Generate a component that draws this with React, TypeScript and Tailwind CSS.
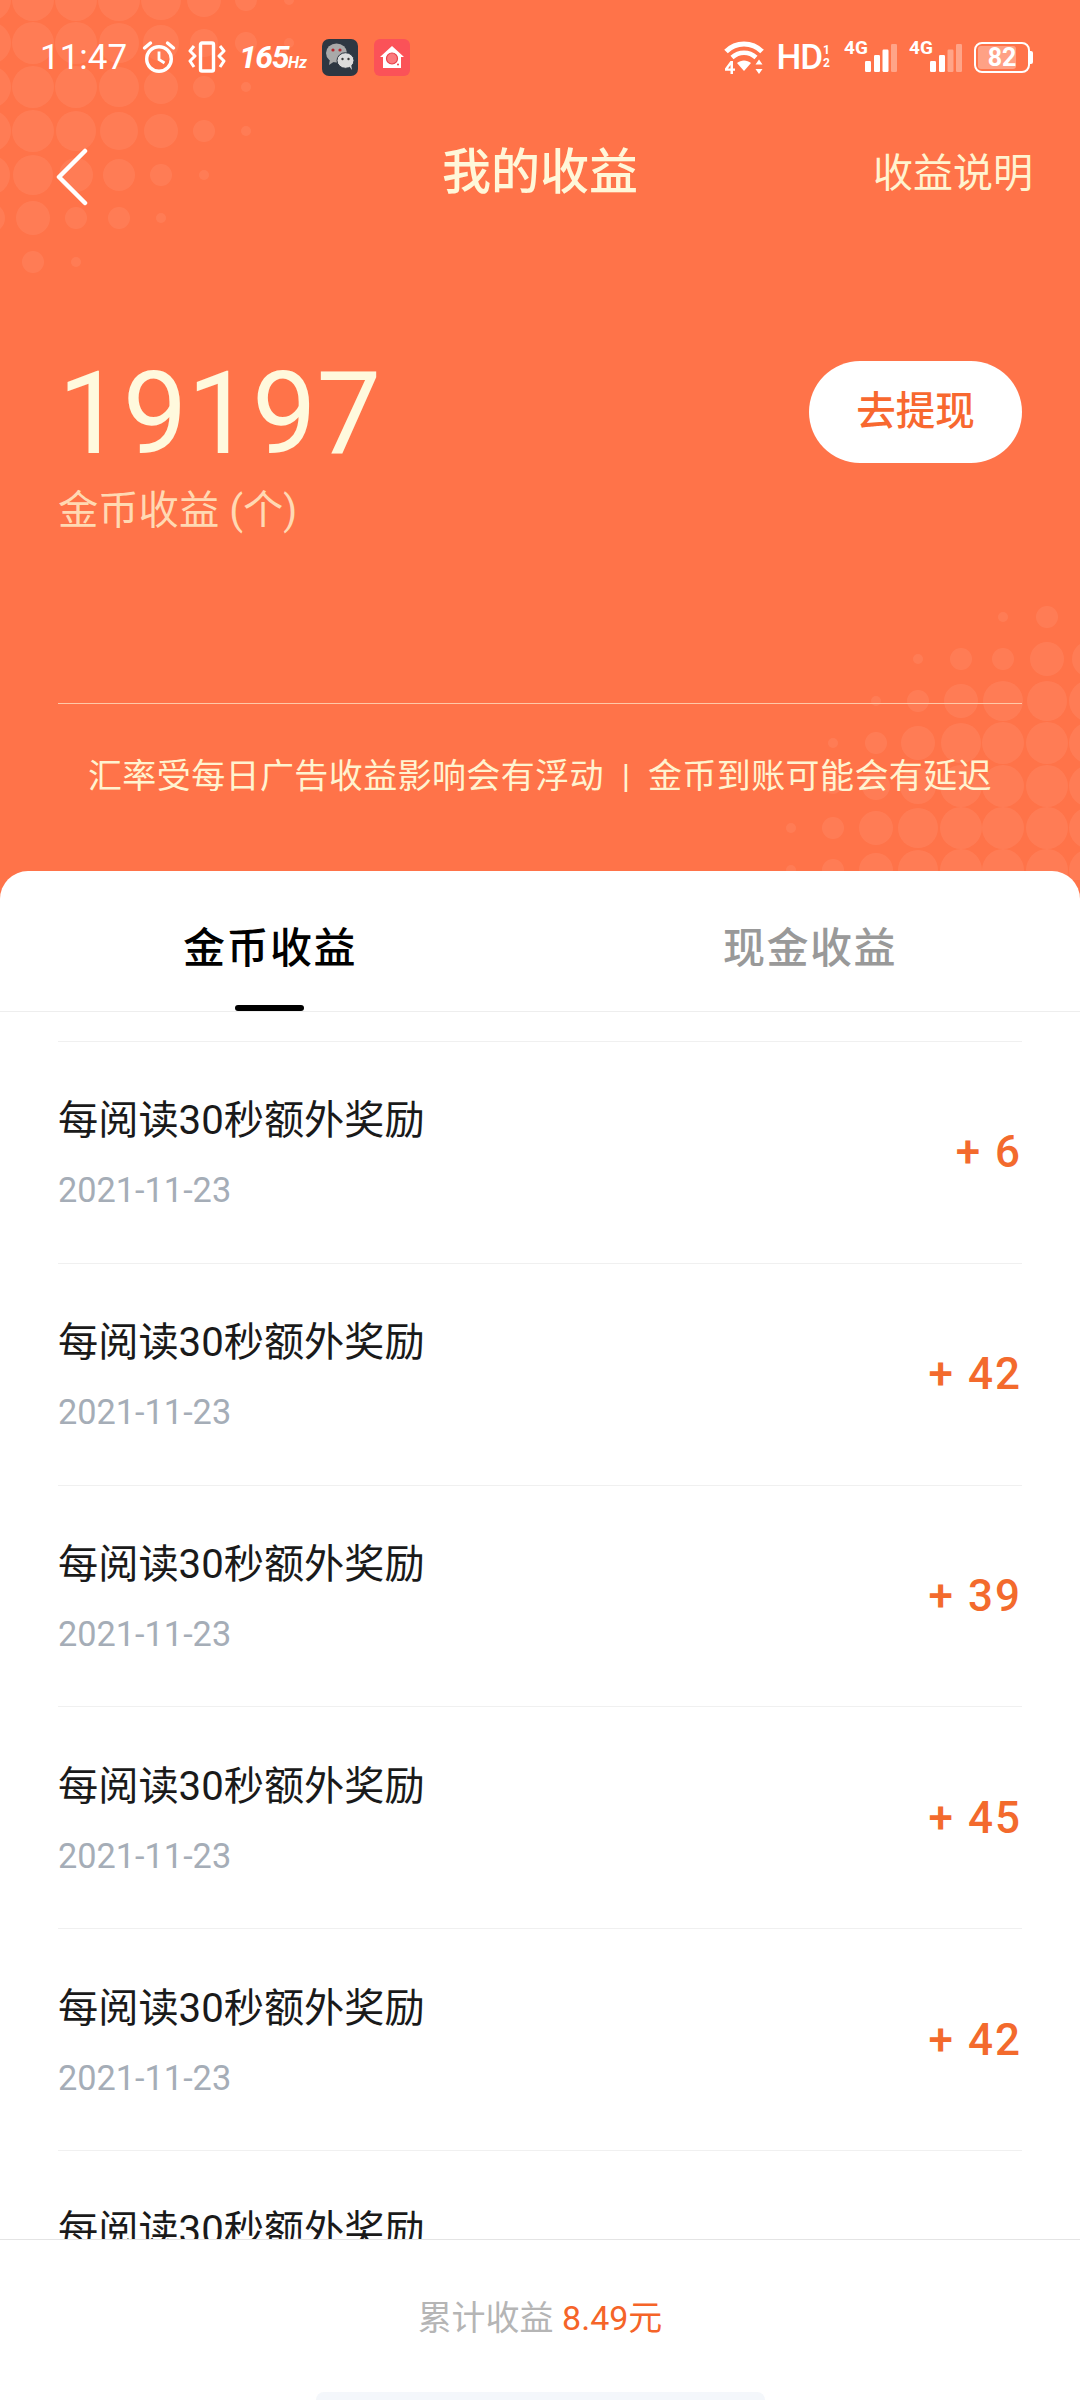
import React from "react";

const CJK = { fontFamily: '"Roboto","Noto Sans CJK SC",sans-serif' };

const TL: [number, number, number][] = [];
const BR: [number, number, number][] = [];
const tlCols = [-10, 33, 76, 119, 161, 204, 246, 289];
const tlRows: [number, number[]][] = [
  [0, [21, 21, 21, 21, 20, 17, 11, 5]],
  [43, [21, 21, 21, 20, 18, 14, 11, 5]],
  [87, [21, 21, 21, 20, 17, 11, 5, 0]],
  [131, [21, 21, 20, 19, 17, 11, 5, 0]],
  [175, [20, 20, 17, 16, 11, 5, 0, 0]],
  [218, [15, 17, 11, 11, 5, 0, 0, 0]],
  [262, [0, 11, 5, 0, 0, 0, 0, 0]],
];
tlRows.forEach(([y, rs]) => rs.forEach((r, i) => r && TL.push([tlCols[i], y, r])));
const brCols = [1090, 1047, 1003, 961, 918, 876, 833, 791];
const brRows: [number, number[]][] = [
  [617, [0, 11, 5, 0, 0, 0, 0, 0]],
  [659, [18, 17, 11, 11, 5, 0, 0, 0]],
  [701, [21, 20, 20, 17, 11, 5, 0, 0]],
  [743, [21, 21, 21, 20, 17, 11, 5, 0]],
  [786, [21, 21, 21, 21, 18, 14, 8, 0]],
  [828, [21, 21, 21, 21, 20, 17, 11, 5]],
  [870, [21, 21, 21, 21, 20, 17, 11, 5]],
];
brRows.forEach(([y, rs]) => rs.forEach((r, i) => r && BR.push([brCols[i], y, r])));

function Dots() {
  return (
    <svg className="absolute left-0 top-0" width="1080" height="880" viewBox="0 0 1080 880">
      {[...TL, ...BR].map(([x, y, r], i) => (
        <circle key={i} cx={x} cy={y} r={r} fill="#ffffff" fillOpacity="0.07" />
      ))}
    </svg>
  );
}

function Alarm() {
  return (
    <svg width="34" height="34" viewBox="0 0 34 34" fill="none" stroke="#fff" strokeWidth="3.4">
      <circle cx="17" cy="19" r="12.3" />
      <path d="M17 11.5v8l5.5 3.5" strokeWidth="2.8" />
      <path d="M2.5 8 8.5 3M31.5 8l-6-5" strokeLinecap="round" />
    </svg>
  );
}

function Vibrate() {
  return (
    <svg width="38" height="32" viewBox="0 0 38 32" fill="none" stroke="#fff" strokeWidth="3">
      <rect x="12.5" y="2" width="13" height="28" rx="1.5" strokeWidth="3.4" />
      <path d="M6 5 2 10l5 5-5 5 4 6M32 5l4 5-5 5 5 5-4 6" strokeLinejoin="round" />
    </svg>
  );
}

function WeChatTile() {
  return (
    <div className="w-[36px] h-[37px] rounded-[7px] bg-[#2e3742] flex items-center justify-center">
      <svg width="32" height="30" viewBox="0 0 32 30">
        <ellipse cx="12.5" cy="11" rx="10.5" ry="9.5" fill="#a9a9a9" />
        <path d="M6 17 5 23l6-4z" fill="#a9a9a9" />
        <circle cx="9" cy="8" r="1.6" fill="#b3272e" />
        <circle cx="16" cy="8" r="1.6" fill="#b3272e" />
        <ellipse cx="21.5" cy="18.5" rx="8.5" ry="7.8" fill="#dcdcdc" stroke="#2e3742" strokeWidth="1" />
        <path d="m25 24 3 4-1-6z" fill="#dcdcdc" />
        <circle cx="18.5" cy="17" r="1.2" fill="#3a3a3a" />
        <circle cx="24.5" cy="17" r="1.2" fill="#3a3a3a" />
      </svg>
    </div>
  );
}

function HomeTile() {
  return (
    <div className="w-[36px] h-[37px] rounded-[6px] bg-[#fb5258] flex items-center justify-center">
      <svg width="26" height="26" viewBox="0 0 26 26">
        <path d="M13 2 1 13h3v11h18V13h3z" fill="#fff" />
        <circle cx="13" cy="14.5" r="5.5" fill="#fb7a7e" stroke="#e8404a" strokeWidth="1.2" />
        <circle cx="19" cy="20.5" r="1" fill="#e8404a" />
      </svg>
    </div>
  );
}

function Wifi() {
  return (
    <svg width="40" height="33" viewBox="0 0 40 33" fill="none">
      <path d="M2 10.5C12 0.5 28 0.5 38 10.5" stroke="#fff" strokeWidth="5" />
      <path d="M8 16.5c7-6.5 17-6.5 24 0" stroke="#fff" strokeWidth="4.5" />
      <path d="M13 22c4-3.5 10-3.5 14 0L20 30z" fill="#fff" />
      <path d="M6.5 20 1 27.5v2.2h5.5V33H9v-3.3h2v-2.2H9V20zM6.5 24v3.5H4z" fill="#fff" fillRule="evenodd" />
      <path d="m35 18.5 3.5 5h-7zM35 33l3.5-5h-7z" fill="#fff" />
    </svg>
  );
}

function Signal({ faded }: { faded: number }) {
  const bars = [
    { y: 17, h: 11 },
    { y: 11, h: 17 },
    { y: 5.5, h: 22.5 },
    { y: 0, h: 28 },
  ];
  const xs = [0, 9, 17.5, 26];
  return (
    <div className="relative w-[54px] h-[34px]">
      <span className="absolute left-0 top-[-2px] text-[19px] leading-[20px] font-bold text-white" style={{ fontFamily: "Roboto, sans-serif" }}>
        4G
      </span>
      <svg className="absolute left-[21px] top-[3px]" width="33" height="30" viewBox="0 0 33 30">
        {bars.map((b, i) => (
          <rect key={i} x={xs[i]} y={b.y + 1} width="6" height={b.h} rx="1.2" fill="#fff" fillOpacity={i >= 4 - faded ? 0.35 : 1} />
        ))}
      </svg>
    </div>
  );
}

function Battery() {
  return (
    <div className="flex items-center">
      <div className="relative w-[56px] h-[31px] rounded-[8px] border-[2.5px] border-white overflow-hidden flex items-center justify-center">
        <div className="absolute left-[2px] top-[2px] bottom-[2px] w-[38px] rounded-[3px] bg-[#ffffff55]" />
        <span className="relative text-[25px] leading-none font-bold text-white" style={{ fontFamily: "Roboto, sans-serif" }}>
          82
        </span>
      </div>
      <div className="w-[3px] h-[13px] bg-white rounded-r-[2px]" />
    </div>
  );
}

function StatusBar() {
  return (
    <div className="h-[115px] pt-[38px] pl-[40px] pr-[47px] flex items-start justify-between">
      <div className="flex items-center h-[38px]">
        <span className="text-[35px] leading-none text-white w-[102px]" style={{ fontFamily: "Roboto, sans-serif" }}>
          11:47
        </span>
        <Alarm />
        <div className="w-[12px]" />
        <Vibrate />
        <span className="ml-[13px] w-[70px] text-white font-bold italic text-[32px] tracking-[-1.5px] leading-none whitespace-nowrap" style={{ fontFamily: "Roboto, sans-serif" }}>
          165<span className="text-[16px] tracking-normal">Hz</span>
        </span>
        <div className="w-[13px]" />
        <WeChatTile />
        <div className="w-[16px]" />
        <HomeTile />
      </div>
      <div className="flex items-center h-[38px]">
        <Wifi />
        <span className="ml-[12px] text-[35px] leading-none text-white font-medium tracking-[-1px]" style={{ fontFamily: "Roboto, sans-serif" }}>
          HD
        </span>
        <span className="flex flex-col items-center ml-[1px] text-[12px] leading-[13px] font-bold text-white" style={{ fontFamily: "Roboto, sans-serif" }}>
          <span>1</span>
          <span>2</span>
        </span>
        <div className="w-[14px]" />
        <Signal faded={1} />
        <div className="w-[11px]" />
        <Signal faded={2} />
        <div className="w-[11px]" />
        <Battery />
      </div>
    </div>
  );
}

function Row({ amount }: { amount: string }) {
  return (
    <div className="h-[221.8px] border-b border-[#f0f0f0] flex items-center justify-between">
      <div className="flex flex-col pb-[2px]">
        <div className="text-[40.2px] leading-[50px] text-[#1a1a1a]">每阅读30秒额外奖励</div>
        <div className="mt-[24px] -mb-[4px] text-[34.3px] leading-[40px] text-[#a5adb7]">2021-11-23</div>
      </div>
      <div className="text-[44px] leading-none font-medium text-[#f36a2d] whitespace-pre tracking-[2px]">{`+ ${amount}`}</div>
    </div>
  );
}

export default function App() {
  return (
    <div className="relative w-[1080px] h-[2400px] overflow-hidden bg-[#ff7349] flex flex-col" style={CJK}>
      <Dots />
      <div className="relative h-[871px] shrink-0 flex flex-col">
        <StatusBar />
        <div className="h-[115px] shrink-0 relative flex items-center justify-center">
          <svg className="absolute left-[56px] top-[33px]" width="32" height="58" viewBox="0 0 32 58" fill="none">
            <path d="M29 3 3 29l26 26" stroke="#fff" strokeWidth="4.5" strokeLinecap="round" strokeLinejoin="round" />
          </svg>
          <span className="text-[49px] leading-none font-medium text-[#fff7d9]">我的收益</span>
          <span className="absolute right-[47px] top-[39px] text-[40px] leading-none text-[#fff3d0]">收益说明</span>
        </div>
        <div className="mt-[131px] pl-[58px] pr-[58px] flex items-start justify-between">
          <div className="flex flex-col">
            <div className="mt-[3px] text-[115px] leading-[100px] text-[#fff9dd]">19197</div>
            <div className="mt-[23px] text-[40.3px] leading-[48px] text-[#ffd9b3]">金币收益 (个)</div>
          </div>
          <div className="w-[213px] h-[102px] rounded-full bg-white flex items-center justify-center text-[39.5px] font-medium text-[#f8682f]">
            去提现
          </div>
        </div>
        <div className="mt-[168px] mx-[58px] h-px bg-[#ffc9a8]" />
        <div className="mt-[49px] text-center text-[34px] leading-[46px] text-[#fff3d0] whitespace-pre tracking-[0.4px]">
          汇率受每日广告收益影响会有浮动  |  金币到账可能会有延迟
        </div>
      </div>
      <div className="relative flex-1 min-h-0 bg-white rounded-t-[28px] flex flex-col overflow-hidden">
        <div className="h-[141px] shrink-0 border-b border-[#eeeeee] flex">
          <div className="relative flex-1 flex items-start justify-center pt-[53px]">
            <span className="text-[42px] leading-[50px] font-medium tracking-[1.5px] text-black">金币收益</span>
            <div className="absolute left-[235px] bottom-0 w-[69px] h-[6px] rounded-full bg-black" />
          </div>
          <div className="flex-1 flex items-start justify-center pt-[53px]">
            <span className="text-[42px] leading-[50px] font-medium tracking-[1.5px] text-[#999999]">现金收益</span>
          </div>
        </div>
        <div className="flex-1 min-h-0 overflow-hidden px-[58px]">
          <div className="h-[30px] border-b border-[#f0f0f0]" />
          <Row amount="6" />
          <Row amount="42" />
          <Row amount="39" />
          <Row amount="45" />
          <Row amount="42" />
          <div className="pt-[55px] text-[40.2px] leading-[50px] text-[#1a1a1a]">每阅读30秒额外奖励</div>
        </div>
        <div className="relative h-[161px] shrink-0 border-t border-[#e4e4e4] bg-white flex justify-center pt-[55px]">
          <span className="text-[34px] leading-[46px] text-[#b5b5b5]">
            累计收益 <span className="text-[#f56428]">8.49元</span>
          </span>
          <div className="absolute left-[316px] top-[152px] w-[449px] h-[12px] rounded-t-[8px] bg-[#f4f7fb]" />
        </div>
      </div>
    </div>
  );
}
